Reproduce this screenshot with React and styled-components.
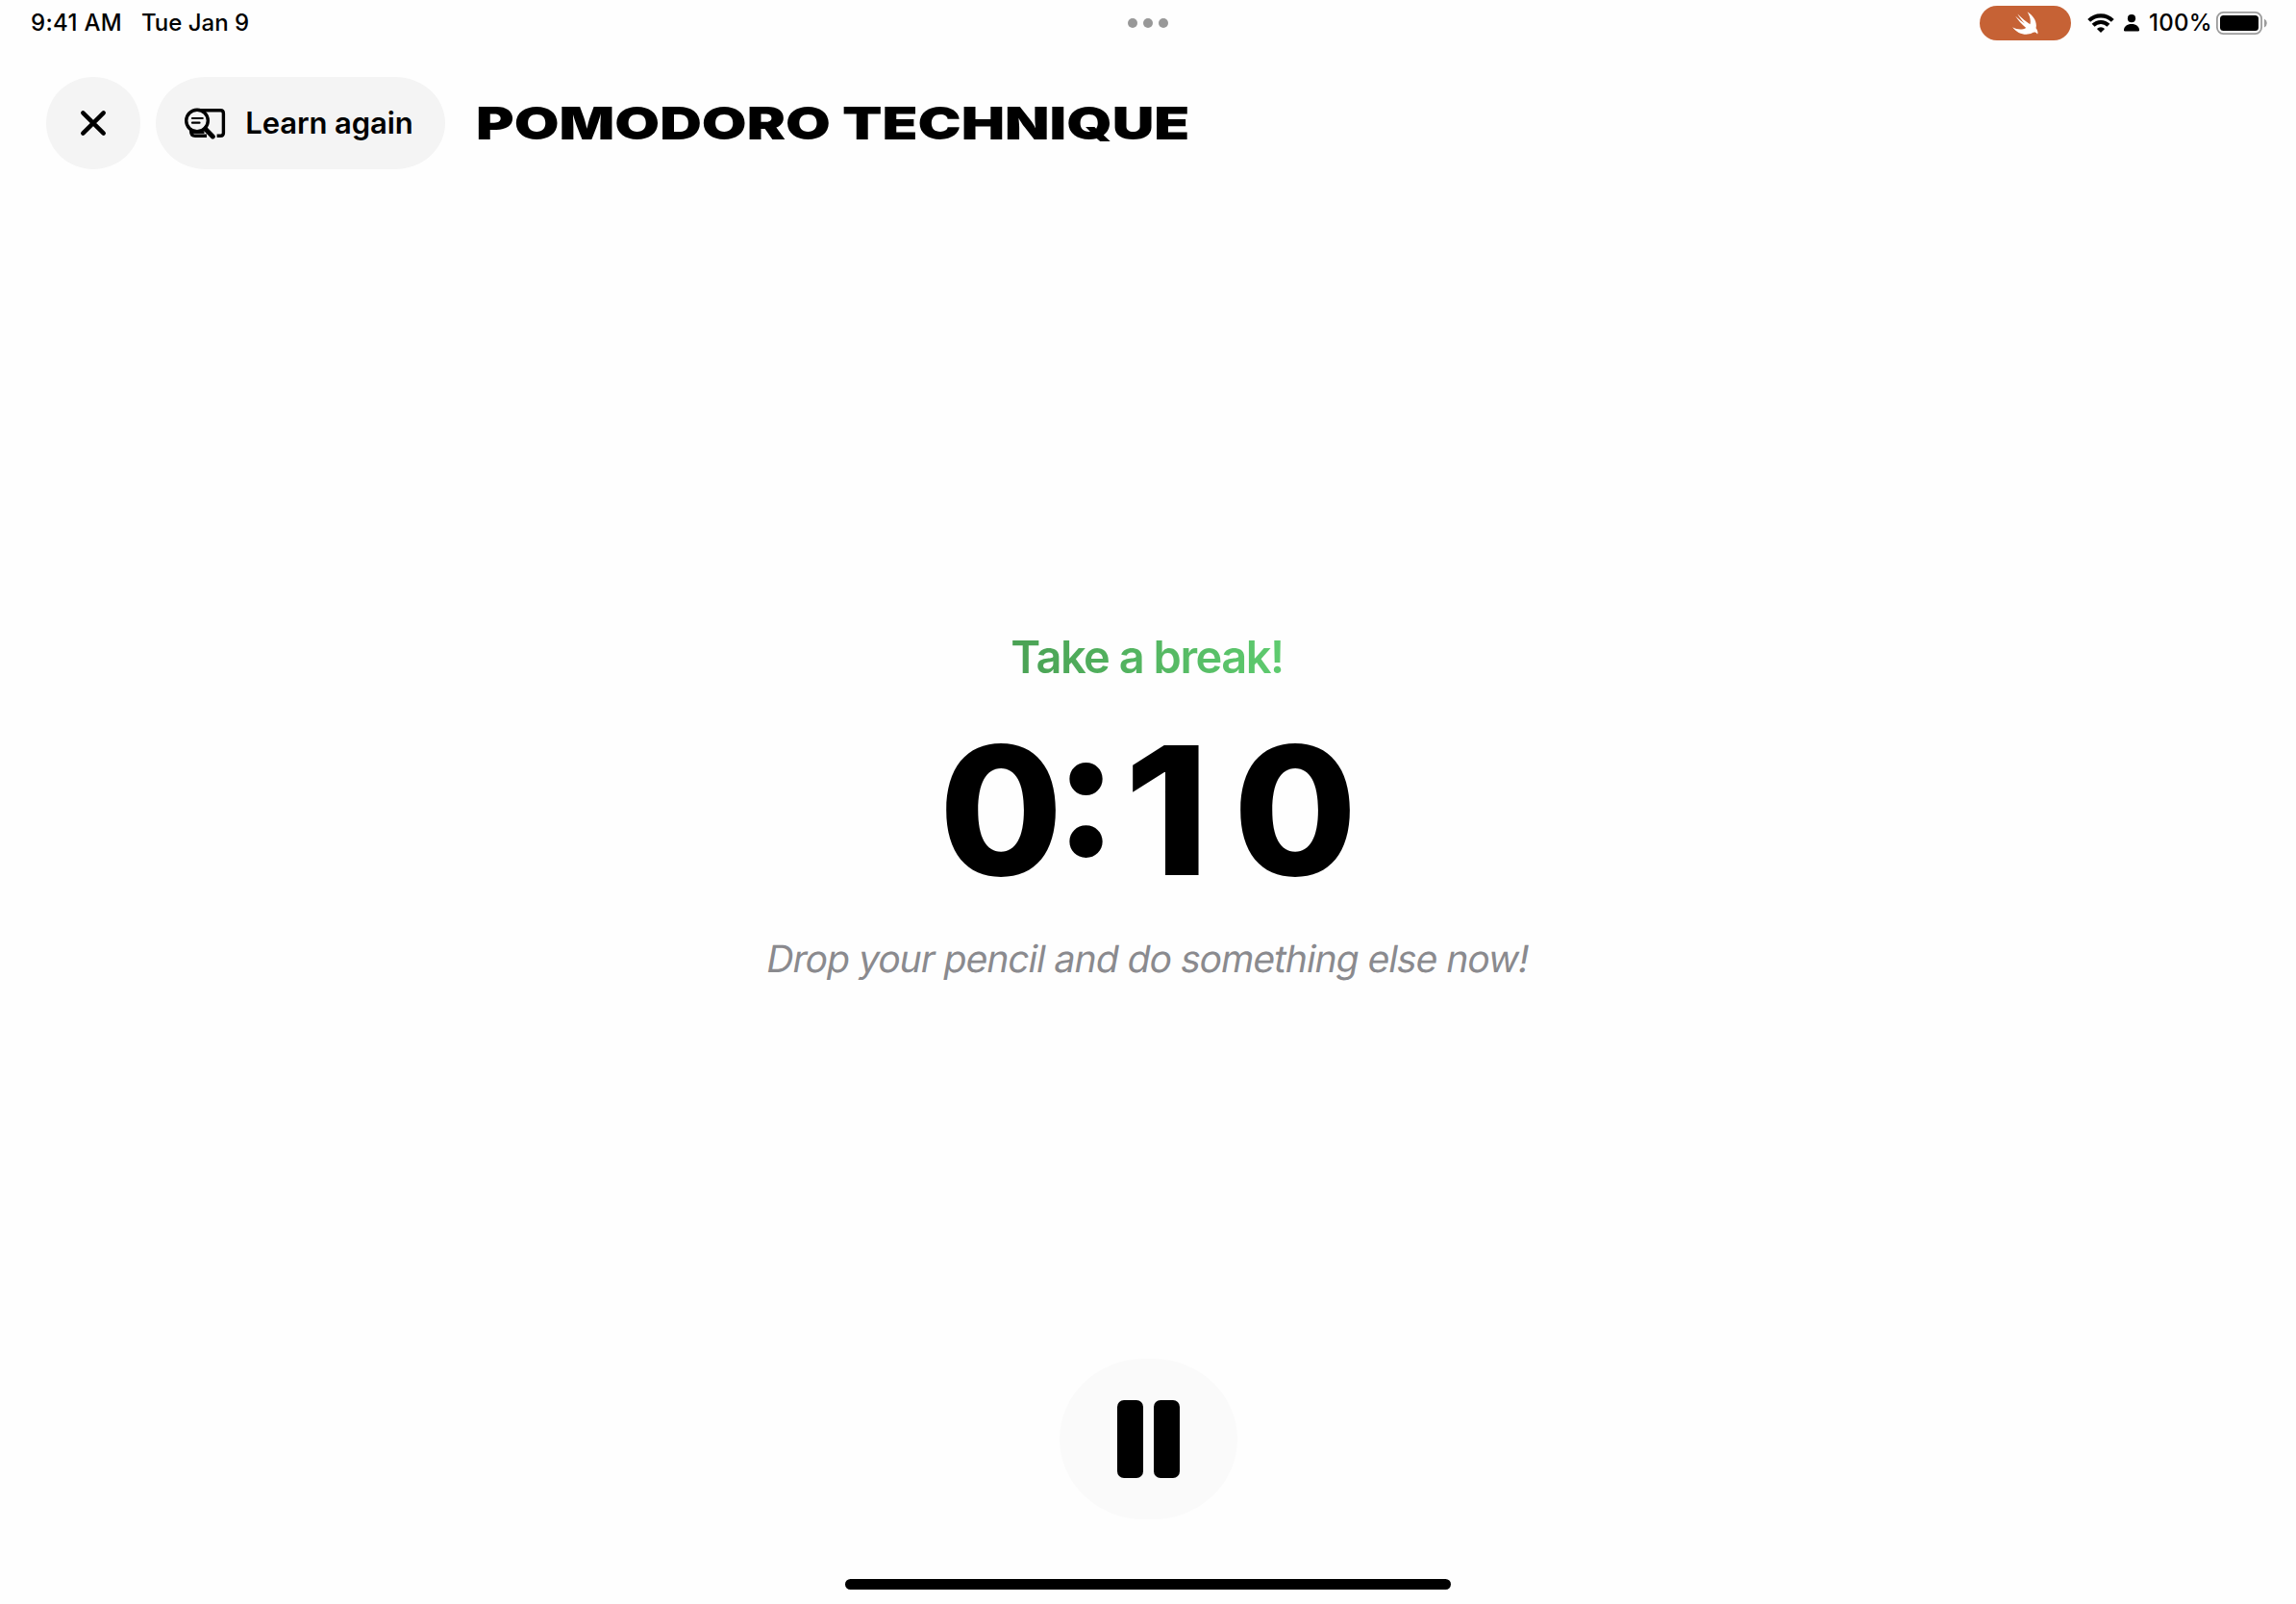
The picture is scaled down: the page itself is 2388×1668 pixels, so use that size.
import React from "react";
import styled, { createGlobalStyle } from "styled-components";

const GlobalStyle = createGlobalStyle`
  * { box-sizing: border-box; }
  html, body { margin: 0; padding: 0; background: #fefefe; }
  body {
    font-family: Inter, "Liberation Sans", sans-serif;
    color: #000;
    -webkit-font-smoothing: antialiased;
  }
  button { border: 0; padding: 0; font: inherit; color: inherit; }
`;

const Screen = styled.div`
  width: 2388px;
  height: 1668px;
  display: flex;
  flex-direction: column;
  overflow: hidden;
`;

const StatusBar = styled.header`
  height: 48px;
  flex: none;
  display: grid;
  grid-template-columns: 1fr auto 1fr;
  align-items: center;
  padding: 0 30px;
`;

const StatusGroup = styled.div`
  display: flex;
  align-items: center;
  justify-content: ${(p) => (p.$end ? "flex-end" : "flex-start")};
`;

const StatusText = styled.span`
  font-size: 24px;
  line-height: 48px;
  font-weight: 500;
  letter-spacing: ${(p) => p.$spacing || "0"};
  margin-left: ${(p) => p.$before || "0"};
  margin-right: ${(p) => p.$after || "0"};
  white-space: nowrap;
`;

const Dots = styled.div`
  display: flex;
  gap: 6px;
`;

const Dot = styled.i`
  width: 10px;
  height: 10px;
  border-radius: 50%;
  background: #989898;
`;

const SwiftPill = styled.div`
  width: 95px;
  height: 36px;
  margin-right: 17px;
  border-radius: 18px;
  background: #c66235;
  display: flex;
  align-items: center;
  justify-content: center;
`;

const Glyph = styled.svg`
  display: block;
  flex: none;
  margin-right: ${(p) => p.$after || "0"};
`;

const Toolbar = styled.nav`
  height: 96px;
  margin-top: 32px;
  padding-left: 48px;
  flex: none;
  display: flex;
  align-items: center;
`;

const PillButton = styled.button`
  width: ${(p) => p.$width};
  height: 96px;
  margin-right: ${(p) => p.$after};
  padding-right: ${(p) => p.$inset || "0"};
  border-radius: ${(p) => p.$radius};
  background: #f4f4f4;
  display: flex;
  align-items: center;
  justify-content: center;
  gap: 20px;
`;

const PillLabel = styled.span`
  font-size: 31px;
  line-height: 40px;
  font-weight: 600;
  letter-spacing: -0.1px;
  white-space: nowrap;
`;

const Title = styled.h1`
  margin: 0;
  font-size: 47px;
  line-height: 96px;
  font-weight: 900;
  white-space: nowrap;
  transform: scaleX(1.286);
  transform-origin: left center;
`;

const Timer = styled.main`
  flex: 1;
  display: flex;
  flex-direction: column;
  align-items: center;
  padding-top: 479px;
`;

const Phase = styled.h2`
  margin: 0 2px 0 0;
  font-size: 47px;
  line-height: 56px;
  font-weight: 600;
  letter-spacing: -1.5px;
  color: transparent;
  background: linear-gradient(90deg, #4aa154, #5ecb6f);
  background-clip: text;
  -webkit-background-clip: text;
`;

const Clock = styled.div`
  margin-top: 22px;
  height: 220px;
  display: flex;
  justify-content: center;
  font-size: 186px;
  line-height: 220px;
  font-weight: 800;
`;

const Digit = styled.span`
  width: ${(p) => p.$width}px;
  display: flex;
  justify-content: center;
`;

const Colon = styled(Digit)`
  line-height: 200px;
  margin-top: -10px;
`;

const One = styled(Digit)`
  margin-left: -5px;
  margin-right: 5px;
  transform: scaleX(1.08);
`;

const Hint = styled.p`
  margin: 20px 0 0;
  font-size: 39px;
  line-height: 48px;
  letter-spacing: -0.95px;
  color: #8a8a8e;
  white-space: nowrap;
  transform: skewX(-10deg);
`;

const Footer = styled.footer`
  flex: none;
  height: 255px;
  display: flex;
  flex-direction: column;
  align-items: center;
`;

const PauseButton = styled.button`
  width: 185px;
  height: 167px;
  border-radius: 88px / 83.5px;
  background: #fafafa;
  display: flex;
  align-items: center;
  justify-content: center;
  gap: 11px;
`;

const PauseBar = styled.i`
  width: 27px;
  height: 81px;
  border-radius: 7px;
  background: #000;
`;

const HomeIndicator = styled.div`
  width: 630px;
  height: 11px;
  margin-top: 62px;
  border-radius: 5.5px;
  background: #000;
`;

const SwiftIcon = () => (
  <Glyph width="27" height="24" viewBox="0 0 27 24">
    <path
      fill="#fff"
      d="M15.600 0.3C22.2 4.5 26.1 11.300 24.500 17.200C26.900 20.200 26.700 23.100 26 23.400C24.600 21.200 22.300 21.300 20.600 22.300C14.500 25.500 5.200 23.400 0.200 16.200C4.800 18.800 10.300 19.300 14.200 16.900C9.600 13.400 5.800 8.600 3.200 4.800C6.700 8 10.300 10.900 12.900 12.500C9.800 9.300 6.900 5.100 5.400 2.500C9.500 6.500 14.300 10.700 18.400 13.200C19.500 9.500 18.100 4.300 15.600 0.300Z"
    />
  </Glyph>
);

const WifiIcon = () => (
  <Glyph width="28" height="20" viewBox="0 0 28 20" $after="10px">
    <g fill="none" stroke="#000" strokeWidth="4.100">
      <path d="M1.700 7.400A17.600 17.600 0 0 1 26.300 7.400" />
      <path d="M6.100 12.300A11.200 11.200 0 0 1 21.900 12.300" />
    </g>
    <path d="M14 20L9.900 15.900A6 6 0 0 1 18.100 15.900Z" />
  </Glyph>
);

const PersonIcon = () => (
  <Glyph width="16" height="18" viewBox="0 0 16 18" $after="10px">
    <circle cx="8" cy="4.200" r="4.100" />
    <path d="M0 16.300C0 12.500 3.300 10 8 10S16 12.500 16 16.300Q16 17.500 14.700 17.500H1.300Q0 17.500 0 16.300Z" />
  </Glyph>
);

const BatteryIcon = () => (
  <Glyph width="53" height="24" viewBox="0 0 53 24">
    <rect x="0.900" y="0.900" width="46.200" height="22.200" rx="6.500" fill="none" stroke="#9c9c9c" strokeWidth="1.800" />
    <rect x="4" y="4" width="40" height="16" rx="3.500" />
    <path d="M50 7.500Q52.800 9 52.800 12T50 16.500Z" fill="#9c9c9c" />
  </Glyph>
);

const CloseIcon = () => (
  <Glyph width="28" height="28" viewBox="0 0 28 28">
    <path d="M3.300 3.300L24.700 24.700M24.700 3.300L3.300 24.700" stroke="#000" strokeWidth="4.500" strokeLinecap="round" />
  </Glyph>
);

const LearnIcon = () => (
  <Glyph width="43" height="33" viewBox="0 0 43 33">
    <g fill="none" stroke="#000" strokeWidth="3.400">
      <path d="M16 2.800H37.300Q40.400 2.800 40.400 5.900V26.200Q40.400 29.300 37.300 29.300H33.600" />
      <path d="M6.700 23V24.800Q6.700 29.300 11 29.300H23" />
      <path d="M7 25.700H20.500" strokeWidth="2.400" />
      <circle cx="13" cy="13.500" r="11.300" fill="#f4f4f4" />
      <path d="M8 11H18.700M8 15.700H15.500" strokeWidth="2.200" strokeLinecap="round" />
    </g>
    <path d="M21.500 22L29.300 29.900" stroke="#000" strokeWidth="5" strokeLinecap="round" />
  </Glyph>
);

export default function App() {
  return (
    <Screen>
      <GlobalStyle />
      <StatusBar>
        <StatusGroup>
          <StatusText $before="2px" $spacing="0.3px">9:41 AM</StatusText>
          <StatusText $before="20px">Tue Jan 9</StatusText>
        </StatusGroup>
        <Dots><Dot /><Dot /><Dot /></Dots>
        <StatusGroup $end>
          <SwiftPill><SwiftIcon /></SwiftPill>
          <WifiIcon />
          <PersonIcon />
          <StatusText $spacing="0.3px" $after="4px">100%</StatusText>
          <BatteryIcon />
        </StatusGroup>
      </StatusBar>
      <Toolbar>
        <PillButton $width="98px" $after="16px" $radius="49px / 48px" aria-label="Close">
          <CloseIcon />
        </PillButton>
        <PillButton $width="301px" $after="32px" $inset="3px" $radius="52px / 48px">
          <LearnIcon />
          <PillLabel>Learn again</PillLabel>
        </PillButton>
        <Title>POMODORO TECHNIQUE</Title>
      </Toolbar>
      <Timer>
        <Phase>Take a break!</Phase>
        <Clock>
          <Digit $width={129}>0</Digit>
          <Colon $width={48}>:</Colon>
          <One $width={129}>1</One>
          <Digit $width={129}>0</Digit>
        </Clock>
        <Hint>Drop your pencil and do something else now!</Hint>
      </Timer>
      <Footer>
        <PauseButton aria-label="Pause"><PauseBar /><PauseBar /></PauseButton>
        <HomeIndicator />
      </Footer>
    </Screen>
  );
}
